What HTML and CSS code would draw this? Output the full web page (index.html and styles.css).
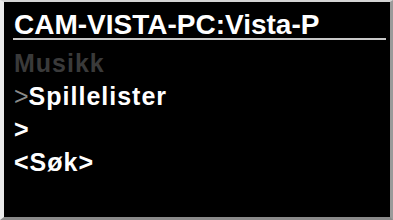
FILE: index.html
```html
<!DOCTYPE html>
<html lang="no">
<head>
    <meta charset="UTF-8">
    <meta name="viewport" content="width=device-width, initial-scale=1.0">
    <title>CAM-VISTA-PC:Vista-P</title>
    <link rel="stylesheet" href="styles.css">
</head>
<body>
    <div class="screen">
        <div class="title">CAM-VISTA-PC:Vista-P</div>
        <ul class="menu">
            <li class="dim">Musikk</li>
            <li><span class="cursor">&gt;</span>Spillelister</li>
            <li>&gt;</li>
            <li>&lt;Søk&gt;</li>
        </ul>
    </div>
</body>
</html>
```

FILE: styles.css
```css
body { margin: 0; background-color: #ffffff; font-family: "Liberation Sans", Arial, sans-serif; }
.screen { width: 393px; height: 220px; box-sizing: border-box; background-color: #000; color: #fff; border-style: solid; border-width: 2px 3px 3px 4px; border-color: #d4d4d4 #9a9a9a #8a8a8a #ececec; padding: 9px 4px 0 9px; overflow: hidden; }
.title { font-size: 28px; font-weight: bold; line-height: 27px; padding-left: 1px; border-bottom: 2px solid #c8c8c8; white-space: nowrap; }
.menu { list-style: none; margin: 7px 0 0 0; padding: 0 0 0 1px; }
.menu li { font-size: 25px; font-weight: bold; line-height: 33px; letter-spacing: 1px; white-space: nowrap; }
.menu li.dim { color: #3a3a3a; }
.cursor { color: #8a8a8a; font-weight: normal; letter-spacing: 0; }
```
